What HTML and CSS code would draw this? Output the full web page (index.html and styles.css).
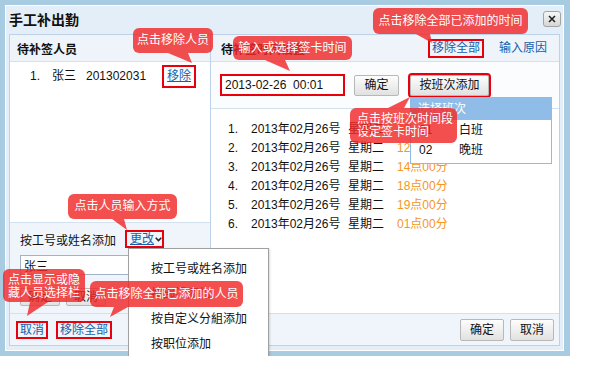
FILE: index.html
```html
<!DOCTYPE html>
<html lang="zh-CN">
<head>
    <meta charset="UTF-8">
    <meta name="viewport" content="width=device-width, initial-scale=1.0">
    <title>手工补出勤</title>
    <link rel="stylesheet" href="styles.css">
</head>
<body>
    <div class="dialog">
        <div class="dialog-inner">
            <div class="dialog-title">
                <h1>手工补出勤</h1>
                <button class="btn-close" type="button" title="关闭">
                    <svg width="8" height="8" viewBox="0 0 8 8"><path d="M1 1 L7 7 M7 1 L1 7" stroke="#222" stroke-width="1.6" fill="none"/></svg>
                </button>
            </div>

            <div class="panels">
                <!-- 待补签人员 -->
                <div class="col col-left">
                    <div class="panel-head head-left">
                        <span class="head-title">待补签人员</span>
                    </div>
                    <div class="people">
                        <div class="person">
                            <span class="num">1.</span>
                            <span class="name">张三</span>
                            <span class="emp-id">201302031</span>
                            <a class="link link-remove mark" href="#">移除</a>
                        </div>
                    </div>
                    <div class="add-box">
                        <div class="add-mode">
                            <span>按工号或姓名添加</span>
                            <a class="link link-change mark" href="#">更改<svg width="7" height="5" viewBox="0 0 7 5"><path d="M0.7 0.7 L3.5 3.6 L6.3 0.7" stroke="#222" stroke-width="1.5" fill="none"/></svg></a>
                        </div>
                        <input class="add-input" type="text" value="张三">
                        <div class="add-btns">
                            <button class="btn btn-sm" type="button">确定</button>
                            <button class="btn btn-sm" type="button">取消</button>
                        </div>
                    </div>
                    <div class="panel-foot foot-left">
                        <a class="link link-foot mark" href="#">取消</a>
                        <a class="link link-foot mark" href="#">移除全部</a>
                    </div>
                </div>

                <!-- 待补签时间设置 -->
                <div class="col col-right">
                    <div class="panel-head head-right">
                        <span class="head-title">待补签时间设置</span>
                        <span class="head-links">
                            <a class="link link-head mark" href="#">移除全部</a>
                            <a class="link link-head" href="#">输入原因</a>
                        </span>
                    </div>
                    <div class="time-row">
                        <input class="time-input mark" type="text" value="2013-02-26  00:01">
                        <button class="btn btn-ok" type="button">确定</button>
                        <button class="btn btn-shift mark" type="button">按班次添加</button>
                    </div>
                    <ol class="times">
                        <li><span class="num">1.</span><span class="date">2013年02月26号</span><span class="week">星期二</span><span class="hour">08点00分</span></li>
                        <li><span class="num">2.</span><span class="date">2013年02月26号</span><span class="week">星期二</span><span class="hour">12点00分</span></li>
                        <li><span class="num">3.</span><span class="date">2013年02月26号</span><span class="week">星期二</span><span class="hour">14点00分</span></li>
                        <li><span class="num">4.</span><span class="date">2013年02月26号</span><span class="week">星期二</span><span class="hour">18点00分</span></li>
                        <li><span class="num">5.</span><span class="date">2013年02月26号</span><span class="week">星期二</span><span class="hour">19点00分</span></li>
                        <li><span class="num">6.</span><span class="date">2013年02月26号</span><span class="week">星期二</span><span class="hour">01点00分</span></li>
                    </ol>
                    <div class="panel-foot foot-right">
                        <button class="btn btn-foot" type="button">确定</button>
                        <button class="btn btn-foot" type="button">取消</button>
                    </div>
                </div>
            </div>
        </div>

        <!-- 选择班次下拉 -->
        <div class="shift-list">
            <div class="shift-head">选择班次</div>
            <div class="shift-item"><span class="shift-no">01</span><span>白班</span></div>
            <div class="shift-item"><span class="shift-no">02</span><span>晚班</span></div>
        </div>

        <!-- 人员输入方式菜单 -->
        <ul class="mode-menu">
            <li>按工号或姓名添加</li>
            <li>按部门添加</li>
            <li>按自定义分組添加</li>
            <li>按职位添加</li>
        </ul>

        <!-- 提示气泡 -->
        <div class="tip tip-remove">点击移除人员</div>
        <div class="tip tip-time">输入或选择签卡时间</div>
        <div class="tip tip-clear-time">点击移除全部已添加的时间</div>
        <div class="tip tip-shift">点击按班次时间段<br>设定签卡时间</div>
        <div class="tip tip-mode">点击人员输入方式</div>
        <div class="tip tip-toggle">点击显示或隐<br>藏人员选择栏</div>
        <div class="tip tip-clear-people">点击移除全部已添加的人员</div>
    </div>
</body>
</html>
```

FILE: styles.css
```css
* {
    box-sizing: border-box;
}
body {
    margin: 0;
    background: #fff;
    font-family: "Liberation Sans", "Noto Sans CJK SC", sans-serif;
    font-size: 12px;
    color: #111;
}
input,
button {
    font: inherit;
    color: inherit;
}
.dialog {
    position: relative;
    width: 570px;
    height: 356px;
    padding: 5px 6px 5px 5px;
    background: #a7cbe0;
}
.dialog-inner {
    height: 100%;
    border: 1px solid #fff;
    background: #e3eef8;
    padding: 0 3px 4px 3px;
    display: flex;
    flex-direction: column;
}
.dialog-title {
    height: 28px;
    display: flex;
    align-items: center;
    justify-content: space-between;
}
.dialog-title h1 {
    margin: 0;
    font-size: 14px;
    font-weight: bold;
    line-height: 16px;
}
.btn-close {
    width: 18px;
    height: 16px;
    margin: -2px -1px 0 0;
    padding: 0;
    border: 1px solid #a3a3a3;
    border-radius: 3px;
    background: linear-gradient(#f7f7f7, #d6d6d6);
    display: flex;
    align-items: center;
    justify-content: center;
}
.panels {
    display: flex;
    height: 312px;
    border: 1px solid #bdd2e8;
}
.col {
    display: flex;
    flex-direction: column;
}
.col-left {
    width: 201px;
    border-right: 1px solid #bdd2e8;
}
.col-right {
    flex: 1;
}
.panel-head {
    height: 27px;
    border-bottom: 1px solid #d3e1ef;
    background: #eef4fa;
    display: flex;
    align-items: center;
}
.head-left {
    padding-left: 7px;
}
.head-right {
    padding: 0 10px;
    justify-content: space-between;
}
.head-title {
    font-weight: bold;
}
.head-links {
    display: flex;
    gap: 15px;
}
.link {
    color: #1560a8;
    text-decoration: none;
}
.mark {
    outline: 2px solid #e8000b;
    outline-offset: 0;
}
.link-head {
    padding: 0 2px;
    line-height: 15px;
}
.people {
    flex: 1;
    background: #fff;
    padding: 5px 0 0 20px;
}
.person {
    display: flex;
    align-items: center;
    height: 19px;
    line-height: 19px;
}
.person .num {
    width: 22px;
}
.person .name {
    width: 34px;
}
.link-remove {
    margin-left: 18px;
    padding: 0 3px;
    text-decoration: underline;
}
.add-box {
    height: 91px;
    border-top: 1px solid #d3e1ef;
    background: #f0f5fb;
    padding: 7px 0 0 10px;
}
.add-mode {
    height: 18px;
    display: flex;
    align-items: center;
}
.link-change {
    margin-left: 11px;
    padding: 0 0 0 3px;
    line-height: 14px;
    text-decoration: underline;
    display: flex;
    align-items: center;
}
.link-change svg {
    margin-left: 1px;
}
.add-input {
    display: block;
    width: 172px;
    height: 20px;
    margin-top: 7px;
    padding: 0 3px;
    border: 1px solid #9fb4c8;
    background: #fff;
}
.add-btns {
    display: flex;
    gap: 6px;
    margin-top: 13px;
}
.btn {
    border: 1px solid #b8b8b8;
    border-radius: 2px;
    background: linear-gradient(#fdfdfd, #e1e1e1);
    padding: 0;
    line-height: 18px;
    cursor: pointer;
}
.btn-sm {
    width: 40px;
    height: 18px;
    line-height: 16px;
}
.panel-foot {
    height: 32px;
    border-top: 1px solid #d3e1ef;
    background: #f0f5fb;
    display: flex;
    align-items: center;
}
.foot-left {
    padding-left: 8px;
    gap: 12px;
}
.link-foot {
    padding: 0 2px;
    line-height: 14px;
}
.foot-right {
    justify-content: flex-end;
    padding-right: 5px;
    gap: 6px;
}
.btn-foot {
    width: 44px;
    height: 22px;
}
.time-row {
    height: 47px;
    border-bottom: 1px solid #d3e1ef;
    background: #fbfcfe;
    display: flex;
    align-items: center;
    gap: 11px;
    padding-left: 11px;
}
.time-input {
    width: 121px;
    height: 18px;
    padding: 0 2px;
    border: 1px solid #fff;
    background: #fff;
}
.btn-ok {
    width: 45px;
    height: 21px;
}
.btn-shift {
    width: 79px;
    height: 21px;
}
.times {
    flex: 1;
    margin: 0;
    padding: 11px 0 0 17px;
    list-style: none;
    background: #fff;
}
.times li {
    display: flex;
    line-height: 19px;
    height: 19px;
}
.times .num {
    width: 23px;
}
.times .date {
    width: 97px;
}
.times .week {
    width: 49px;
}
.times .hour {
    color: #f5961f;
}
.shift-list {
    position: absolute;
    left: 410px;
    top: 97px;
    width: 142px;
    height: 67px;
    border: 1px solid #8ebce6;
    background: #fff;
}
.shift-head {
    height: 22px;
    line-height: 22px;
    padding-left: 7px;
    background: #8fbde8;
    color: #fff;
}
.shift-item {
    display: flex;
    height: 20px;
    line-height: 20px;
}
.shift-no {
    width: 48px;
    padding-left: 8px;
}
.mode-menu {
    position: absolute;
    left: 128px;
    top: 248px;
    width: 141px;
    height: 115px;
    margin: 0;
    padding: 8px 0 0 0;
    list-style: none;
    background: #fff;
    border: 1px solid #a0a0a0;
    box-shadow: 1px 1px 2px rgba(0, 0, 0, 0.15);
}
.mode-menu li {
    height: 25px;
    line-height: 25px;
    padding-left: 22px;
}
.tip {
    position: absolute;
    background: rgba(240, 40, 40, 0.82);
    color: #fff;
    border-radius: 6px;
    white-space: nowrap;
    text-align: center;
}
.tip::after {
    content: "";
    position: absolute;
    background: rgba(240, 40, 40, 0.82);
}
.tip-remove {
    left: 133px;
    top: 28px;
    width: 80px;
    height: 25px;
    line-height: 25px;
}
.tip-remove::after {
    left: 35px;
    top: 25px;
    width: 24px;
    height: 10px;
    clip-path: polygon(0 0, 20px 0, 24px 10px);
}
.tip-time {
    left: 233px;
    top: 36px;
    width: 119px;
    height: 24px;
    line-height: 24px;
}
.tip-time::after {
    left: 32px;
    top: 24px;
    width: 25px;
    height: 11px;
    clip-path: polygon(0 0, 20px 0, 25px 11px);
}
.tip-clear-time {
    left: 373px;
    top: 8px;
    width: 155px;
    height: 26px;
    line-height: 26px;
}
.tip-clear-time::after {
    left: 43px;
    top: 26px;
    width: 16px;
    height: 9px;
    clip-path: polygon(0 0, 14px 0, 16px 9px);
}
.tip-shift {
    left: 350px;
    top: 108px;
    width: 107px;
    height: 35px;
    padding: 5px 0 0 7px;
    line-height: 13px;
    text-align: left;
}
.tip-shift::after {
    left: 38px;
    top: -11px;
    width: 22px;
    height: 11px;
    clip-path: polygon(0 11px, 16px 11px, 22px 0);
}
.tip-mode {
    left: 68px;
    top: 194px;
    width: 109px;
    height: 25px;
    line-height: 25px;
}
.tip-mode::after {
    left: 44px;
    top: 25px;
    width: 15px;
    height: 11px;
    clip-path: polygon(0 0, 12px 0, 15px 11px);
}
.tip-toggle {
    left: 3px;
    top: 269px;
    width: 82px;
    height: 33px;
    padding: 5px 0 0 5px;
    line-height: 13px;
    text-align: left;
}
.tip-toggle::after {
    left: 24px;
    top: 33px;
    width: 21px;
    height: 14px;
    clip-path: polygon(3px 0, 21px 0, 0 14px);
}
.tip-clear-people {
    left: 90px;
    top: 281px;
    width: 153px;
    height: 26px;
    line-height: 26px;
}
.tip-clear-people::after {
    left: 20px;
    top: 26px;
    width: 18px;
    height: 10px;
    clip-path: polygon(4px 0, 18px 0, 0 10px);
}
```
